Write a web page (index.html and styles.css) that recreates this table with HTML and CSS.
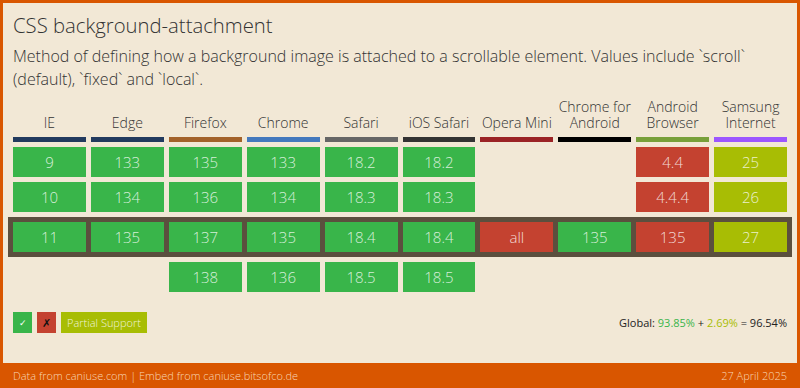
FILE: index.html
```html
<!DOCTYPE html>
<html>
<head>
<meta charset="utf-8">
<link rel="stylesheet" href="styles.css">
</head>
<body>
<div class="frame">
  <main class="panel">
    <h1 class="title">CSS background-attachment</h1>
    <p class="desc">Method of defining how a background image is attached to a scrollable element. Values include `scroll` (default), `fixed` and `local`.</p>

    <div class="grid heads">
      <div class="head"><span class="name">IE</span><span class="bar b-ie"></span></div>
      <div class="head"><span class="name">Edge</span><span class="bar b-edge"></span></div>
      <div class="head"><span class="name">Firefox</span><span class="bar b-ff"></span></div>
      <div class="head"><span class="name">Chrome</span><span class="bar b-ch"></span></div>
      <div class="head"><span class="name">Safari</span><span class="bar b-sf"></span></div>
      <div class="head"><span class="name">iOS Safari</span><span class="bar b-ios"></span></div>
      <div class="head"><span class="name">Opera Mini</span><span class="bar b-om"></span></div>
      <div class="head"><span class="name">Chrome for Android</span><span class="bar b-and"></span></div>
      <div class="head"><span class="name">Android Browser</span><span class="bar b-ab"></span></div>
      <div class="head"><span class="name">Samsung Internet</span><span class="bar b-sam"></span></div>
    </div>

    <div class="grid row">
      <div class="cell y">9</div><div class="cell y">133</div><div class="cell y">135</div><div class="cell y">133</div><div class="cell y">18.2</div><div class="cell y">18.2</div><div class="cell"></div><div class="cell"></div><div class="cell n">4.4</div><div class="cell a">25</div>
    </div>
    <div class="grid row">
      <div class="cell y">10</div><div class="cell y">134</div><div class="cell y">136</div><div class="cell y">134</div><div class="cell y">18.3</div><div class="cell y">18.3</div><div class="cell"></div><div class="cell"></div><div class="cell n">4.4.4</div><div class="cell a">26</div>
    </div>
    <div class="current">
      <div class="grid row">
        <div class="cell y">11</div><div class="cell y">135</div><div class="cell y">137</div><div class="cell y">135</div><div class="cell y">18.4</div><div class="cell y">18.4</div><div class="cell n">all</div><div class="cell y">135</div><div class="cell n">135</div><div class="cell a">27</div>
      </div>
    </div>
    <div class="grid row">
      <div class="cell"></div><div class="cell"></div><div class="cell y">138</div><div class="cell y">136</div><div class="cell y">18.5</div><div class="cell y">18.5</div><div class="cell"></div><div class="cell"></div><div class="cell"></div><div class="cell"></div>
    </div>

    <div class="legend">
      <div class="keys">
        <span class="key k-y">&#10003;</span>
        <span class="key k-n">&#10007;</span>
        <span class="key k-a">Partial Support</span>
      </div>
      <div class="global">Global: <span class="g-y">93.85%</span> + <span class="g-a">2.69%</span> = 96.54%</div>
    </div>
  </main>
  <footer class="footer">
    <span>Data from caniuse.com | Embed from caniuse.bitsofco.de</span>
    <span>27 April 2025</span>
  </footer>
</div>
</body>
</html>
```

FILE: styles.css
```css
* { box-sizing: border-box; }
html, body { margin: 0; padding: 0; }
body {
  width: 800px;
  height: 388px;
  overflow: hidden;
  background: #d95600;
  font-family: "Open Sans", "DejaVu Sans", sans-serif;
}
.frame {
  display: flex;
  flex-direction: column;
  height: 388px;
}
.panel {
  margin: 3px 3px 0 3px;
  height: 360px;
  background: #f2e8d6;
  padding: 9px 5px 0 5px;
  color: #333;
}
.title {
  margin: 0 0 0 5px;
  font-size: 20.3px;
  font-weight: 300;
  line-height: 26px;
  color: #333;
}
.desc {
  margin: 7px 0 0 5px;
  font-size: 16px;
  font-weight: 300;
  line-height: 23px;
  color: #333;
}
.grid {
  display: grid;
  grid-template-columns: repeat(10, 1fr);
  column-gap: 5px;
  padding: 0 5px;
}
.heads {
  margin-top: 8px;
  align-items: end;
}
.head {
  display: flex;
  flex-direction: column;
  align-items: center;
}
.name {
  font-size: 14px;
  font-weight: 300;
  line-height: 16px;
  text-align: center;
  color: #333;
  margin-bottom: 6px;
}
.bar {
  display: block;
  width: 100%;
  height: 5px;
}
.b-ie, .b-edge { background: #223a5e; }
.b-ff { background: #a3622a; }
.b-ch { background: #4479bd; }
.b-sf { background: #666666; }
.b-ios { background: #333333; }
.b-om { background: #9b2325; }
.b-and { background: #000000; }
.b-ab { background: #78a03a; }
.b-sam { background: #9c56ff; }
.row {
  margin-top: 5px;
}
.cell {
  height: 30px;
  display: flex;
  align-items: center;
  justify-content: center;
  font-size: 15px;
  font-weight: 300;
  color: rgba(255, 255, 255, 0.8);
}
.cell.y { background: #39b54a; }
.cell.n { background: #c44230; }
.cell.a { background: #a8bd04; }
.current {
  margin-top: 5px;
  background: #5b4f3e;
  padding: 5px 0;
}
.current .row { margin-top: 0; }
.current + .row { margin-top: 5px; }
.legend {
  display: flex;
  justify-content: space-between;
  align-items: center;
  padding: 0 5px;
  margin-top: 20px;
}
.keys {
  display: flex;
  gap: 5px;
}
.key {
  height: 21px;
  display: flex;
  align-items: center;
  justify-content: center;
  font-size: 11px;
  font-weight: 300;
}
.k-y { width: 19px; background: #39b54a; color: #fff; font-size: 9px; }
.k-n { width: 19px; background: #c44230; color: #111; font-size: 11px; }
.k-a { padding: 0 6px; background: #a8bd04; color: rgba(255,255,255,0.85); }
.global {
  font-size: 11px;
  color: #222;
}
.g-y { color: #39b54a; }
.g-a { color: #a8bd04; }
.footer {
  flex: 1;
  display: flex;
  justify-content: space-between;
  align-items: center;
  padding: 0 13px 1px 13px;
  font-size: 11px;
  font-weight: 300;
  color: rgba(255, 235, 215, 0.85);
}
```
